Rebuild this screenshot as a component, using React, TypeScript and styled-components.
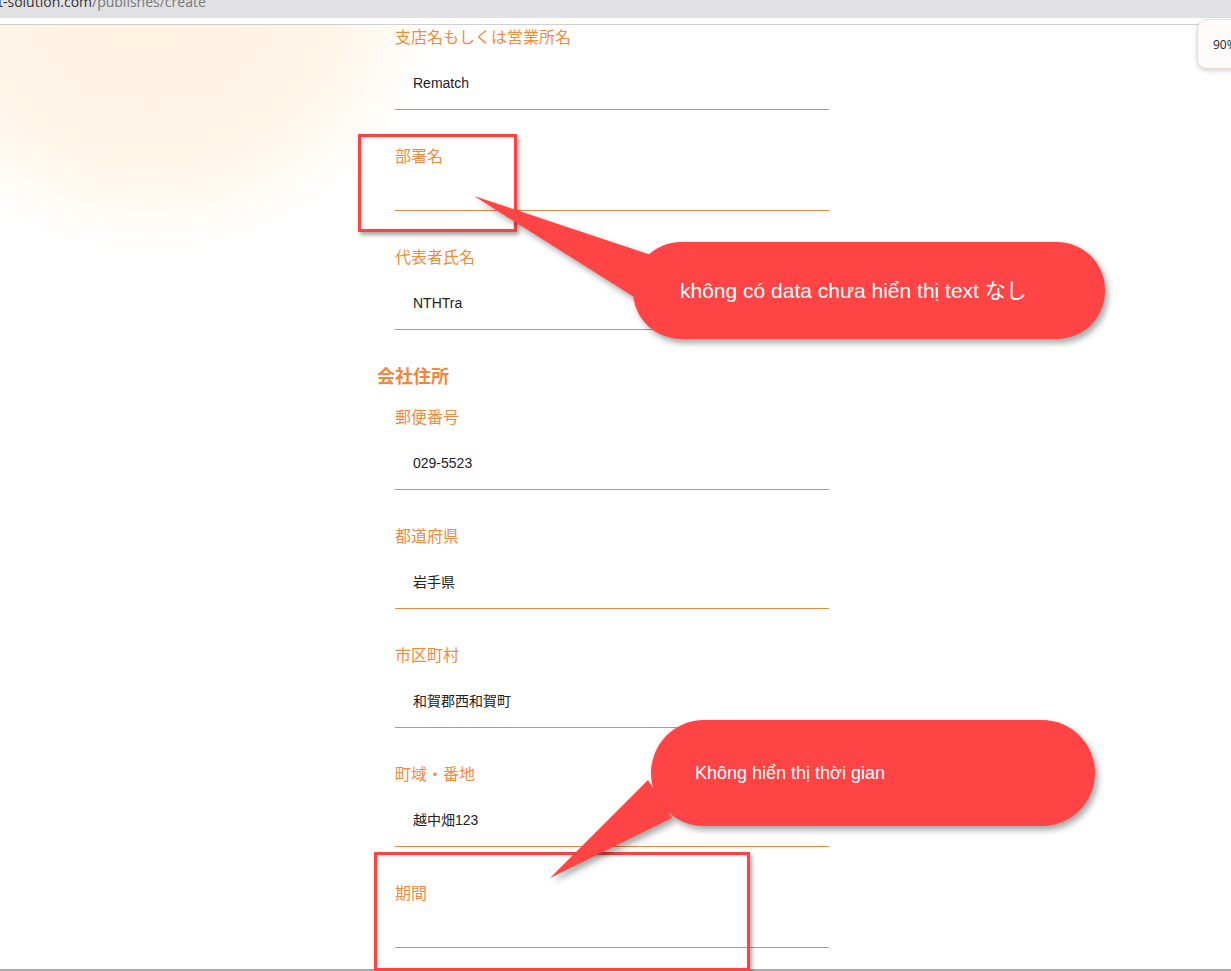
import { createGlobalStyle, styled } from "styled-components";

const GlobalStyle = createGlobalStyle`
  html, body {
    margin: 0;
    padding: 0;
    background: #fff;
  }
  body {
    font-family: "Liberation Sans", Arial, sans-serif;
  }
`;

const Screen = styled.div`
  position: relative;
  width: 1231px;
  height: 971px;
  overflow: hidden;
  display: flex;
  flex-direction: column;
  background: #fff;
`;

const BrowserBar = styled.div`
  height: 18px;
  background: #e1e1e3;
  overflow: hidden;
`;

const Url = styled.div`
  margin: -7px 0 0 -2px;
  font-family: "Open Sans", "Noto Sans", sans-serif;
  font-size: 14px;
  line-height: 18px;
  color: #333;
  white-space: nowrap;
`;

const UrlPath = styled.span`
  color: #777;
`;

const BarGap = styled.div`
  height: 6px;
  background: #fff;
  border-bottom: 1px solid #cfcfcf;
`;

const Page = styled.div`
  flex: 1;
  overflow: hidden;
  background: radial-gradient(
    circle at 150px -70px,
    #fff3df 0,
    #fff5e7 200px,
    #fffaf3 250px,
    #ffffff 300px
  );
  border-bottom: 2px solid #a9a9a9;
`;

const Form = styled.div`
  margin-left: 377px;
  width: 452px;
  padding-top: 1px;
`;

const SectionTitle = styled.h3`
  margin: 1px 0 21px;
  font-family: "Noto Sans CJK JP", sans-serif;
  font-size: 18px;
  font-weight: 700;
  line-height: 20px;
  color: #f0883c;
`;

const Field = styled.div`
  margin-left: 18px;
  margin-bottom: 35px;
  border-bottom: 1px solid #f0883c;
`;

const Label = styled.div`
  font-family: "Noto Sans CJK JP", sans-serif;
  font-size: 16px;
  line-height: 20px;
  color: #f28a3e;
`;

const Value = styled.div<{ $empty?: boolean }>`
  margin-top: 27px;
  padding: 0 0 16px 18px;
  height: ${(p) => (p.$empty ? "2px" : "20px")};
  font-family: "Liberation Sans", "Noto Sans CJK JP", sans-serif;
  font-size: 14px;
  line-height: 20px;
  color: #222;
`;

const ZoomPopup = styled.div`
  position: absolute;
  left: 1197px;
  top: 19px;
  width: 60px;
  height: 50px;
  box-sizing: border-box;
  padding: 17px 0 0 15px;
  background: #fffbfb;
  border: 1px solid #f1dcd4;
  border-radius: 10px;
  box-shadow: 0 2px 5px rgba(0, 0, 0, 0.18);
  font-family: "Open Sans", sans-serif;
  font-size: 12px;
  line-height: 16px;
  color: #222;
`;

const MarkBox = styled.div<{ $x: number; $y: number; $w: number; $h: number }>`
  position: absolute;
  left: ${(p) => p.$x}px;
  top: ${(p) => p.$y}px;
  width: ${(p) => p.$w}px;
  height: ${(p) => p.$h}px;
  box-sizing: border-box;
  border: 3px solid #f54545;
  box-shadow: 2px 3px 4px rgba(0, 0, 0, 0.35), inset 1px 1px 3px rgba(0, 0, 0, 0.2);
`;

const CalloutLayer = styled.svg`
  position: absolute;
  left: 0;
  top: 0;
  width: 1231px;
  height: 971px;
  pointer-events: none;
  filter: drop-shadow(3px 4px 3px rgba(0, 0, 0, 0.35));
`;

const CalloutText = styled.div<{ $x: number; $y: number; $size: number }>`
  position: absolute;
  left: ${(p) => p.$x}px;
  top: ${(p) => p.$y}px;
  font-family: "Liberation Sans", "Noto Sans CJK JP", sans-serif;
  font-size: ${(p) => p.$size}px;
  line-height: 24px;
  color: #fff;
  white-space: nowrap;
`;

const CALLOUT_RED = "#fe4444";

export default function App() {
  return (
    <>
      <GlobalStyle />
      <Screen>
        <BrowserBar>
          <Url>
            t-solution.com<UrlPath>/publishes/create</UrlPath>
          </Url>
        </BrowserBar>
        <BarGap />
        <Page>
          <Form>
            <Field>
              <Label>支店名もしくは営業所名</Label>
              <Value>Rematch</Value>
            </Field>
            <Field>
              <Label>部署名</Label>
              <Value $empty />
            </Field>
            <Field>
              <Label>代表者氏名</Label>
              <Value>NTHTra</Value>
            </Field>
            <SectionTitle>会社住所</SectionTitle>
            <Field>
              <Label>郵便番号</Label>
              <Value>029-5523</Value>
            </Field>
            <Field>
              <Label>都道府県</Label>
              <Value>岩手県</Value>
            </Field>
            <Field>
              <Label>市区町村</Label>
              <Value>和賀郡西和賀町</Value>
            </Field>
            <Field>
              <Label>町域・番地</Label>
              <Value>越中畑123</Value>
            </Field>
            <Field>
              <Label>期間</Label>
              <Value $empty />
            </Field>
          </Form>
        </Page>

        <ZoomPopup>90%</ZoomPopup>

        <MarkBox $x={358} $y={134} $w={159} $h={98} />
        <MarkBox $x={374} $y={852} $w={376} $h={119} />

        <CalloutLayer viewBox="0 0 1231 971">
          <rect x={633} y={242} width={472} height={97} rx={48} fill={CALLOUT_RED} />
          <polygon points="474,196 660,258 642,302" fill={CALLOUT_RED} />
          <rect x={651} y={720} width={444} height={106} rx={53} fill={CALLOUT_RED} />
          <polygon points="550,878 648,780 672,818" fill={CALLOUT_RED} />
        </CalloutLayer>
        <CalloutText $x={680} $y={279} $size={21}>
          không có data chưa hiển thị text なし
        </CalloutText>
        <CalloutText $x={695} $y={761} $size={18}>
          Không hiển thị thời gian
        </CalloutText>
      </Screen>
    </>
  );
}
